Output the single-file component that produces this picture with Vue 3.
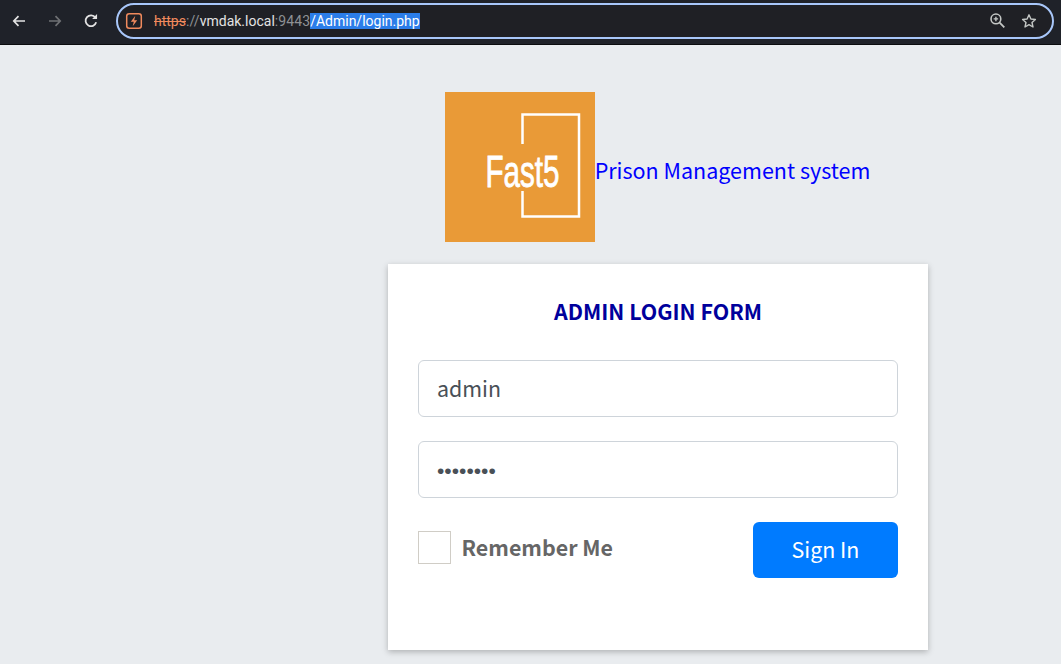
<template>
  <div class="browser">
    <header class="toolbar">
      <button class="nav-btn" aria-label="Back">
        <svg width="16" height="16" viewBox="0 0 16 16"><path d="M14 8H3M7.500 3.200 2.800 8l4.700 4.800" fill="none" stroke="#e3e3e3" stroke-width="1.700" /></svg>
      </button>
      <button class="nav-btn" aria-label="Forward">
        <svg width="16" height="16" viewBox="0 0 16 16"><path d="M2 8h11M8.500 3.200 13.200 8l-4.700 4.800" fill="none" stroke="#6f7174" stroke-width="1.700" /></svg>
      </button>
      <button class="nav-btn" aria-label="Reload">
        <svg width="18" height="18" viewBox="0 0 16 16">
          <path d="M12.600 9.200a4.800 4.800 0 1 1-.7-4.200" fill="none" stroke="#e3e3e3" stroke-width="1.600" />
          <path d="M13.400 1.800v4.400H9z" fill="#e3e3e3" />
        </svg>
      </button>
      <div class="omnibox">
        <svg class="site-icon" width="18" height="18" viewBox="0 0 18 18">
          <rect x="1.700" y="1.700" width="14.600" height="14.600" rx="2.500" fill="none" stroke="#f08a5d" stroke-width="1.500" />
          <path d="M10.300 3.800 5.800 9.800h3l-1.100 4.400 4.500-6H9.200z" fill="#f08a5d" />
        </svg>
        <span class="url">
          <span class="scheme">https</span><span class="dim">://</span><span class="host">vmdak.local</span><span class="dim">:9443</span><span class="selected">/Admin/login.php</span>
        </span>
        <svg class="zoom-icon" width="17" height="17" viewBox="0 0 16 16">
          <circle cx="6.500" cy="6.500" r="4.600" fill="none" stroke="#c4c7c5" stroke-width="1.500" />
          <path d="M10 10l4.400 4.400" stroke="#c4c7c5" stroke-width="1.700" />
          <path d="M4.400 6.500h4.200M6.500 4.400v4.200" stroke="#c4c7c5" stroke-width="1.300" />
        </svg>
        <svg class="star-icon" width="16" height="16" viewBox="0 0 16 16">
          <path d="M8 1.800l1.900 4.200 4.500.5-3.400 3 1 4.500L8 11.700 4 14l1-4.500-3.400-3 4.500-.5z" fill="none" stroke="#c4c7c5" stroke-width="1.400" stroke-linejoin="round" />
        </svg>
      </div>
    </header>

    <main class="page">
      <div class="brand">
        <div class="logo">
          <svg width="150" height="150" viewBox="0 0 150 150">
            <path d="M77.500 52V22.500H134V124.500H77.500V99" fill="none" stroke="#fff" stroke-width="2.500" />
            <text x="40.500" y="95" class="logo-text" textLength="74" lengthAdjust="spacingAndGlyphs">Fast5</text>
          </svg>
        </div>
        <a class="brand-name" href="#">Prison Management system</a>
      </div>

      <form class="card" @submit.prevent>
        <h1 class="title">ADMIN LOGIN FORM</h1>
        <input class="field" type="text" v-model="username" />
        <input class="field secret" type="password" v-model="password" />
        <div class="actions">
          <label class="remember">
            <span class="check"></span>
            <span class="remember-text">Remember Me</span>
          </label>
          <button class="submit" type="submit">Sign In</button>
        </div>
      </form>
    </main>
  </div>
</template>

<script setup>
import { ref } from 'vue'

const username = ref('admin')
const password = ref('password')
</script>

<style scoped>
.browser {
  width: 1061px;
  height: 664px;
  display: flex;
  flex-direction: column;
  overflow: hidden;
  background: #e9ecef;
  font-family: "Noto Sans CJK SC", "Noto Sans", sans-serif;
}

.toolbar {
  height: 45px;
  flex: none;
  display: flex;
  align-items: center;
  padding: 0 7px 3px 1px;
  box-sizing: border-box;
  background: #1f2229;
  border-bottom: 1px solid #0b0c0e;
}

.nav-btn {
  width: 36px;
  height: 32px;
  flex: none;
  padding: 0;
  display: flex;
  align-items: center;
  justify-content: center;
  border: 0;
  background: none;
}

.omnibox {
  flex: 1;
  height: 36px;
  margin-left: 7px;
  display: flex;
  align-items: center;
  padding: 0 15px 0 7px;
  box-sizing: border-box;
  border: 2px solid #a8c7fa;
  border-radius: 18px;
  background: #1f2025;
}

.url {
  margin-left: 11px;
  flex: 1;
  font-family: "Roboto", "Noto Sans", sans-serif;
  font-size: 14px;
  color: #e3e3e3;
  white-space: nowrap;
}

.scheme {
  color: #f08a5d;
  text-decoration: line-through;
}

.dim {
  color: #8e9194;
  letter-spacing: 0.1px;
}

.selected {
  background: #2b7de9;
  color: #fff;
}

.star-icon {
  margin-left: 15px;
}

.page {
  flex: 1;
  display: flex;
  flex-direction: column;
  align-items: center;
  padding: 47px 0 0 255px;
}

.brand {
  display: flex;
  align-items: center;
  margin-right: 1px;
}

.logo {
  width: 150px;
  height: 150px;
  background: #e99a37;
}

.logo svg {
  display: block;
}

.logo-text {
  font-family: "Liberation Sans", sans-serif;
  font-size: 44px;
  fill: #fff;
  stroke: #fff;
  stroke-width: 0.8px;
}

.brand-name {
  padding-top: 6px;
  font-size: 21.5px;
  line-height: 30px;
  color: #0000ff;
  text-decoration: none;
}

.card {
  width: 540px;
  height: 386px;
  margin-top: 22px;
  padding: 30px;
  box-sizing: border-box;
  background: #fff;
  box-shadow: 0 2px 6px rgba(0, 0, 0, 0.25);
}

.title {
  margin: 0 0 32px;
  height: 34px;
  font-size: 21.4px;
  line-height: 34px;
  font-weight: 700;
  text-align: center;
  color: #00009c;
}

.field {
  display: block;
  width: 100%;
  height: 57px;
  margin-bottom: 24px;
  padding: 0 18px 2px;
  box-sizing: border-box;
  border: 1px solid #ced4da;
  border-radius: 6px;
  outline: none;
  background: #fff;
  font-family: inherit;
  font-size: 21.4px;
  color: #495057;
}

.secret {
  padding: 3px 18px 0;
  font-family: "Liberation Sans", sans-serif;
  font-size: 21px;
}

.actions {
  display: flex;
  align-items: flex-start;
  justify-content: space-between;
}

.remember {
  display: flex;
  align-items: center;
  gap: 11px;
  margin-top: 9px;
  font-size: 21.4px;
  line-height: 31px;
  font-weight: 700;
  color: #666;
}

.remember-text {
  margin-left: -0.5px;
  padding-bottom: 2px;
}

.check {
  width: 33px;
  height: 33px;
  box-sizing: border-box;
  border: 1px solid #d0cdc6;
  background: #fff;
}

.submit {
  width: 145px;
  height: 56px;
  padding: 0 0 3px;
  border: 0;
  border-radius: 6px;
  background: #007bff;
  color: #fff;
  font-family: inherit;
  font-size: 21.4px;
}
</style>
